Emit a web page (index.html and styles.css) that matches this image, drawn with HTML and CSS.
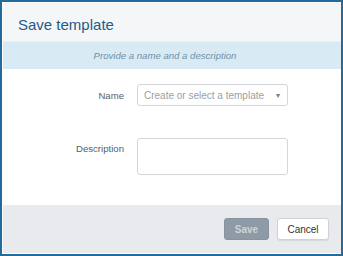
FILE: index.html
```html
<!DOCTYPE html>
<html>
    <head>
        <meta charset="UTF-8">
        <title>Save template</title>
        <link rel="stylesheet" href="styles.css">
    </head>
    <body>
        <div class="dialog">
            <div class="head">
                <h1 class="title">Save template</h1>
            </div>
            <div class="hint">Provide a name and a description</div>
            <div class="form">
                <label class="label label_mid">Name</label>
                <div class="select">
                    <span class="placeholder">Create or select a template</span>
                    <span class="arrow">&#9662;</span>
                </div>
                <label class="label label_top">Description</label>
                <div class="textarea"></div>
            </div>
            <div class="foot">
                <button class="btn btn_save">Save</button>
                <button class="btn btn_cancel">Cancel</button>
            </div>
        </div>
    </body>
</html>
```
FILE: styles.css
```css
html, body{
    margin: 0;
    height: 100%;
}
body{
    background-color: #256a9c;
    padding: 2px;
    box-sizing: border-box;
    font-family: 'Liberation Sans', Arial, sans-serif;
}
.dialog{
    width: 339px;
    height: 252px;
    background-color: #fff;
    border: 1px solid #fff;
    border-right: 0;
    box-sizing: border-box;
    display: flex;
    flex-direction: column;
}
.head{
    height: 38px;
    background-color: #f4f6f8;
    display: flex;
    align-items: center;
    padding-left: 15px;
    padding-top: 4px;
    box-sizing: border-box;
}
.title{
    margin: 0;
    font-size: 15px;
    font-weight: normal;
    color: #1f5b8a;
}
.hint{
    height: 28px;
    background-color: #d8ebf5;
    border-top: 1px solid #e6f1f7;
    box-sizing: border-box;
    display: flex;
    align-items: center;
    justify-content: center;
    padding-right: 14px;
    font-size: 9.6px;
    font-style: italic;
    color: #7190a8;
}
.form{
    flex: 1;
    display: grid;
    grid-template-columns: 121px 151px;
    grid-template-rows: 22px 37px;
    column-gap: 13px;
    row-gap: 32px;
    padding-top: 15px;
    align-content: start;
}
.label{
    font-size: 9.6px;
    color: #555f66;
    text-align: right;
}
.label_mid{
    align-self: center;
}
.label_top{
    padding-top: 5px;
}
.select{
    border: 1px solid #d3d6da;
    border-radius: 3px;
    display: flex;
    align-items: center;
    justify-content: space-between;
    padding: 0 7px 0 6px;
    box-sizing: border-box;
}
.placeholder{
    font-size: 10px;
    color: #9a9fa4;
}
.arrow{
    font-size: 8px;
    color: #7a8086;
}
.textarea{
    border: 1px solid #d3d6da;
    border-radius: 3px;
}
.foot{
    height: 48px;
    background-color: #e9eaee;
    display: flex;
    justify-content: flex-end;
    align-items: flex-start;
    gap: 8px;
    padding: 13px 12px 0 0;
    box-sizing: border-box;
}
.btn{
    height: 22px;
    font-family: 'Liberation Sans', Arial, sans-serif;
    font-size: 10px;
    border-radius: 3px;
    padding: 0;
}
.btn_save{
    width: 45px;
    background-color: #8e9ba6;
    border: 1px solid #8693a0;
    color: #cdd3d8;
    font-weight: bold;
}
.btn_cancel{
    width: 52px;
    background-color: #fff;
    border: 1px solid #cfd2d6;
    color: #333;
    box-shadow: 0 1px 1px rgba(0, 0, 0, 0.08);
}
```
